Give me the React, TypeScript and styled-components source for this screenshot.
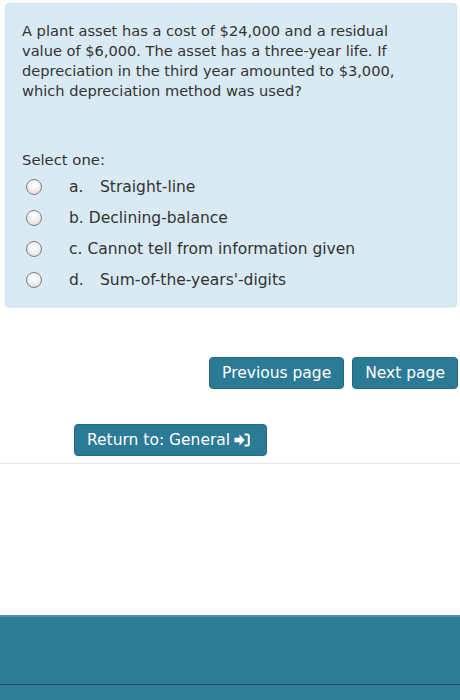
import React from "react";
import styled, { createGlobalStyle } from "styled-components";

const Global = createGlobalStyle`
  html, body { margin: 0; padding: 0; background: #fff; }
  body { font-family: "DejaVu Sans", Verdana, sans-serif; color: #333; }
`;

const Page = styled.div`
  min-height: 700px;
  display: flex;
  flex-direction: column;
`;

const QuestionBox = styled.div`
  margin: 3px 3px 0 5px;
  height: 304px;
  box-sizing: border-box;
  background: #d9eaf4;
  border: 1px solid #cfe2ee;
  border-radius: 4px;
  box-shadow: 0 1px 1px rgba(0,0,0,0.08);
  padding: 17px 16px 0 16px;
  display: flex;
  flex-direction: column;
`;

const QuestionText = styled.p`
  margin: 0;
  font-size: 14.6px;
  line-height: 20px;
  color: #333;
  white-space: nowrap;
`;

const Prompt = styled.div`
  margin-top: 49px;
  font-size: 14.8px;
  line-height: 20px;
`;

const Options = styled.div`
  display: flex;
  flex-direction: column;
  gap: 11px;
  margin-top: 7px;
`;

const Option = styled.label`
  display: flex;
  align-items: center;
  height: 20px;
  font-size: 15.5px;
  line-height: 20px;
`;

const Radio = styled.span`
  width: 16px;
  height: 16px;
  box-sizing: border-box;
  border-radius: 50%;
  border: 1px solid #7f7f7f;
  background: radial-gradient(circle at 50% 35%, #ffffff 0%, #f2f2f2 45%, #d3d3d3 100%);
  margin-left: 4px;
  margin-right: 27px;
  flex: none;
`;

const Letter = styled.span<{ $wide?: boolean }>`
  display: inline-block;
  width: ${(p) => (p.$wide ? "31px" : "auto")};
  margin-right: ${(p) => (p.$wide ? "0" : "5px")};
`;

const NavRow = styled.div`
  display: flex;
  justify-content: flex-end;
  gap: 8px;
  margin-top: 50px;
  padding-right: 2px;
`;

const Button = styled.button<{ $iconRight?: boolean }>`
  font-family: "DejaVu Sans", Verdana, sans-serif;
  font-size: 15.5px;
  color: #fff;
  background: #2b7a96;
  border: 1px solid #236a84;
  border-radius: 4px;
  height: 32px;
  padding: 0 ${(p) => (p.$iconRight ? "16px" : "12px")} 0 12px;
  display: inline-flex;
  align-items: center;
  gap: 4px;
  cursor: pointer;
`;

const ReturnRow = styled.div`
  margin-top: 35px;
  padding-left: 74px;
`;

const Divider = styled.hr`
  margin: 7px 0 0 0;
  border: 0;
  border-top: 1px solid #e6e6e6;
`;

const Footer = styled.footer`
  margin-top: auto;
  height: 85px;
  box-sizing: border-box;
  background: #2e7d96;
  border-top: 2px solid #4a93a8;
  display: flex;
  flex-direction: column;
  justify-content: flex-end;
`;

const FooterBar = styled.div`
  height: 15px;
  border-top: 1px solid #1b5568;
  background: #307e97;
`;

const SignInIcon = () => (
  <svg width="16" height="14" viewBox="0 0 16 14" aria-hidden="true">
    <path d="M0.5 4.8 H5.5 V1.5 L10.8 7 L5.5 12.5 V9.2 H0.5 Z" fill="#fff" />
    <path d="M10.5 1.5 H13.3 Q14.8 1.5 14.8 3 V11 Q14.8 12.5 13.3 12.5 H10.5" fill="none" stroke="#fff" strokeWidth="2" />
  </svg>
);

const options = [
  { l: "a.", t: "Straight-line", wide: true },
  { l: "b.", t: "Declining-balance", wide: false },
  { l: "c.", t: "Cannot tell from information given", wide: false },
  { l: "d.", t: "Sum-of-the-years'-digits", wide: true },
];

export default function App() {
  return (
    <Page>
      <Global />
      <QuestionBox>
        <QuestionText>
          A plant asset has a cost of $24,000 and a residual
          <br />
          value of $6,000. The asset has a three-year life. If
          <br />
          depreciation in the third year amounted to $3,000,
          <br />
          which depreciation method was used?
        </QuestionText>
        <Prompt>Select one:</Prompt>
        <Options>
          {options.map((o) => (
            <Option key={o.l}>
              <Radio />
              <Letter $wide={o.wide}>{o.l}</Letter>
              {o.t}
            </Option>
          ))}
        </Options>
      </QuestionBox>
      <NavRow>
        <Button>Previous page</Button>
        <Button>Next page</Button>
      </NavRow>
      <ReturnRow>
        <Button $iconRight>
          Return to: General
          <SignInIcon />
        </Button>
      </ReturnRow>
      <Divider />
      <Footer>
        <FooterBar />
      </Footer>
    </Page>
  );
}
